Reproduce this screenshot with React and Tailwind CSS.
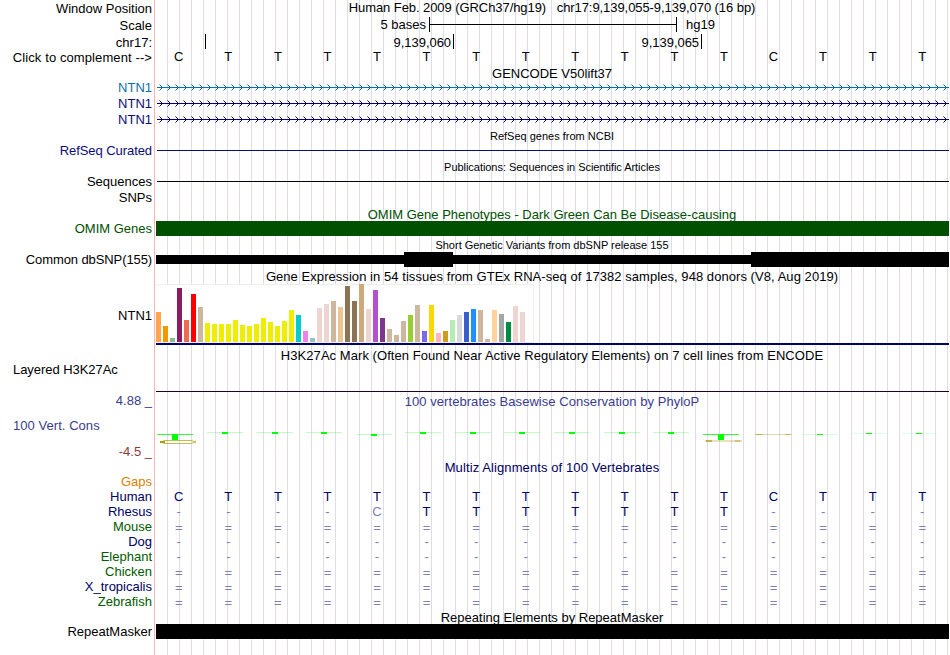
import React from 'react';
import clsx from 'clsx';

const BASES = 'CTTTTTTTTTTTCTTT';

const ALIGNMENTS = [
  { name: 'Human', color: 'text-[#000060]', seq: 'CTTTTTTTTTTTCTTT' },
  { name: 'Rhesus', color: 'text-[#000060]', seq: '----CTTTTTTT----' },
  { name: 'Mouse', color: 'text-[#005a00]', seq: '================' },
  { name: 'Dog', color: 'text-[#000060]', seq: '----------------' },
  { name: 'Elephant', color: 'text-[#005a00]', seq: '----------------' },
  { name: 'Chicken', color: 'text-[#005a00]', seq: '================' },
  { name: 'X_tropicalis', color: 'text-[#000060]', seq: '================' },
  { name: 'Zebrafish', color: 'text-[#005a00]', seq: '================' },
];

// [height in px, tissue color]
const TISSUES = [
  [30, '#ffa54f'], [16, '#ee9a00'], [4, '#8fbc8f'], [54, '#8b1c62'], [22, '#ee6a50'], [48, '#ff0000'],
  [35, '#cdb79e'], [19, '#eeee00'], [18, '#eeee00'], [18, '#eeee00'], [18, '#eeee00'], [22, '#eeee00'],
  [17, '#eeee00'], [16, '#eeee00'], [18, '#eeee00'], [24, '#eeee00'], [20, '#eeee00'], [16, '#eeee00'],
  [21, '#eeee00'], [32, '#eeee00'], [27, '#00cdcd'], [11, '#ee82ee'], [4, '#9ac0cd'], [34, '#eed5d2'],
  [38, '#eed5d2'], [41, '#cdb79e'], [35, '#eec591'], [56, '#8b7355'], [41, '#8b7355'], [58, '#cdaa7d'],
  [33, '#eed5d2'], [52, '#b452cd'], [24, '#7a378b'], [13, '#cdb79e'], [7, '#cdb79e'], [21, '#cdb79e'],
  [27, '#9acd32'], [37, '#cdb79e'], [11, '#7a67ee'], [37, '#ffd700'], [9, '#ffb6c1'], [11, '#cd9b1d'],
  [22, '#b4eeb4'], [27, '#d9d9d9'], [30, '#3a5fcd'], [33, '#1e90ff'], [32, '#cdb79e'], [3, '#cdb79e'],
  [32, '#ffd39b'], [28, '#a6a6a6'], [20, '#008b45'], [36, '#eed5d2'], [30, '#eed5d2'], [0, '#ff00ff'],
];

// PhyloP marks: left of the block, top, height of the block, opacity of the hairline
const MARKS = [
  [16, 25, 6, 0.8], [66, 23, 2, 0.25], [116, 23, 2, 0.25], [165, 23, 2, 0.25], [215, 25, 2, 0.25],
  [264, 23, 2, 0.25], [314, 23, 2, 0.25], [363, 23, 2, 0.25], [413, 23, 2, 0.25], [463, 23, 2, 0.25],
  [512, 23, 2, 0.25], [562, 25, 6, 0.8], [661, 25, 1, 0.15], [710, 24, 1, 0.12], [760, 24, 1, 0.12],
];

function Row({ h, label, color = 'text-black', align = 'items-center justify-end', children }) {
  return (
    <div className={clsx('flex shrink-0', h)}>
      <div className={clsx('flex w-[156px] shrink-0 whitespace-nowrap pr-[4px] pl-[13px]', align, color)}>{label}</div>
      <div className="w-[793px] shrink-0">{children}</div>
    </div>
  );
}

function Title({ children, className = 'text-black' }) {
  return <div className={clsx('flex h-full items-center justify-center whitespace-pre pr-px', className)}>{children}</div>;
}

function baseClass(c, dim) {
  if (c === '=') return 'self-start pt-[2px] leading-[13px] text-[#8080b0]';
  if (c === '-' || dim) return 'text-[#8080b0]';
  return undefined;
}

function Letters({ seq, dimC }) {
  return (
    <div className="-ml-[2px] grid h-full w-[793px] grid-cols-[repeat(16,minmax(0,1fr))] items-center text-center">
      {seq.split('').map((c, i) => (
        <span key={i} className={baseClass(c, dimC && c === 'C')}>{c}</span>
      ))}
    </div>
  );
}

function Transcript({ color }) {
  const arrows = [];
  for (let x = 6.5; x < 793; x += 8) arrows.push(`M${x - 3} 4.5l3 3l-3 3`);
  return (
    <svg className={clsx('block', color)} width="793" height="16" fill="none" stroke="currentColor">
      <path d="M1 7.5H793" shapeRendering="crispEdges" />
      <path d={arrows.join('')} />
    </svg>
  );
}

function Expression() {
  return (
    <div className="flex h-[61px] flex-col border-b-2 border-[#000070]">
      <div className="flex h-[59px] w-[378px] items-end gap-[2px] border border-l-0 border-[#eeeeee] bg-white">
        {TISSUES.map(([height, color], i) => (
          <div key={i} className="w-[5px] shrink-0" style={{ height, backgroundColor: color }} />
        ))}
      </div>
    </div>
  );
}

function PhyloP() {
  return (
    <svg className="block" width="793" height="36" shapeRendering="crispEdges">
      {MARKS.map(([x, y, height, opacity]) => (
        <g key={x} fill="#00ff00">
          <rect x={x - 15} y={y} width="36" height="1" opacity={opacity} />
          <rect x={x} y={y} width="6" height={height} />
        </g>
      ))}
      <g shapeRendering="auto" fill="none" stroke="#a8a000">
        <path d="M4 33L9 31.5H35L40 33L35 34.5H9Z" strokeOpacity="0.7" />
        <path d="M4 33H9" strokeWidth="2" />
      </g>
      <g fill="#b0a020">
        <rect x="549" y="31" width="37" height="2" opacity="0.3" />
        <rect x="550" y="31" width="6" height="2" opacity="0.7" />
        <rect x="579" y="31" width="5" height="2" opacity="0.4" />
        <rect x="599" y="25" width="37" height="1" opacity="0.4" />
        <rect x="600" y="25" width="6" height="1" opacity="0.7" />
        <rect x="629" y="25" width="5" height="1" opacity="0.6" />
      </g>
    </svg>
  );
}

export default function App() {
  return (
    <div className="flex h-[655px] w-[950px] overflow-hidden bg-white bg-[linear-gradient(to_right,#ffb4b4_0_1px,transparent_1px),repeating-linear-gradient(to_right,transparent_0_11px,#dcdcf8_11px_12px)] bg-[size:796px_100%,793px_100%] bg-[position:154px_0,156px_0] bg-no-repeat font-['Liberation_Sans',Arial,sans-serif] text-[13px] leading-[15px]">
      <div className="flex flex-col">
        <Row h="h-[16px]" label="Window Position">
          <Title className="pb-px tracking-[-0.07px]">{'Human Feb. 2009 (GRCh37/hg19)   chr17:9,139,055-9,139,070 (16 bp)'}</Title>
        </Row>
        <Row h="h-[17px]" label="Scale" align="items-center justify-end pt-px">
          <div className="flex h-full items-center">
            <span className="w-[270px] text-right">5 bases</span>
            <div className="ml-[3px] flex h-[15px] w-[248px] items-center border-x border-black">
              <div className="h-px w-full bg-black" />
            </div>
            <span className="ml-[9px]">hg19</span>
          </div>
        </Row>
        <Row h="h-[17px]" label="chr17:" align="items-center justify-end pt-[2px]">
          <div className="flex items-center pt-[1px]">
            <div className="h-[15px] w-[50px] border-r border-black" />
            <div className="h-[15px] w-[248px] border-r border-black pr-[2px] text-right leading-[17px] tracking-[-0.05px]">9,139,060</div>
            <div className="h-[15px] w-[248px] border-r border-black pr-[2px] text-right leading-[17px] tracking-[-0.05px]">9,139,065</div>
          </div>
        </Row>
        <Row h="h-[15px]" label="Click to complement -->" align="items-center justify-end tracking-[0.1px]">
          <div className="-mt-px h-full"><Letters seq={BASES} /></div>
        </Row>

        <Row h="h-[15px]"><Title className="pt-[2px]">GENCODE V50lift37</Title></Row>
        <Row h="h-[16px]" label="NTN1" color="text-[#0c70ac]" align="items-start justify-end"><Transcript color="text-[#0c70ac]" /></Row>
        <Row h="h-[16px]" label="NTN1" color="text-[#0c0c78]" align="items-start justify-end"><Transcript color="text-[#000070]" /></Row>
        <Row h="h-[16px]" label="NTN1" color="text-[#0c0c78]" align="items-start justify-end"><Transcript color="text-[#000070]" /></Row>

        <Row h="h-[15px]"><Title className="pt-[2px] text-[11px]">RefSeq genes from NCBI</Title></Row>
        <Row h="h-[16px]" label="RefSeq Curated" color="text-[#0c0c78]" align="items-start justify-end tracking-[-0.07px]">
          <div className="ml-px h-[8px] border-b border-[#0c0c78]" />
        </Row>
        <Row h="h-[15px]"><Title className="pt-[2px] text-[11px] tracking-[-0.04px]">Publications: Sequences in Scientific Articles</Title></Row>
        <Row h="h-[16px]" label="Sequences" align="items-start justify-end">
          <div className="ml-px h-[8px] border-b border-black" />
        </Row>
        <Row h="h-[16px]" label="SNPs" align="items-start justify-end" />

        <Row h="h-[15px]"><Title className="pt-[2px] text-[#005000]">OMIM Gene Phenotypes - Dark Green Can Be Disease-causing</Title></Row>
        <Row h="h-[15px]" label="OMIM Genes" color="text-[#005000]"><div className="h-full bg-[#005000]" /></Row>
        <Row h="h-[16px]"><Title className="pt-[2px] text-[11px]">Short Genetic Variants from dbSNP release 155</Title></Row>
        <Row h="h-[15px]" label="Common dbSNP(155)" align="items-center justify-end tracking-[-0.1px]">
          <div className="flex h-full items-center">
            <div className="h-[9px] w-[248px] bg-black" />
            <div className="h-[15px] w-[49px] bg-black" />
            <div className="h-[9px] w-[298px] bg-black" />
            <div className="h-[15px] w-[198px] bg-black" />
          </div>
        </Row>

        <Row h="h-[17px]">
          <Title className="pt-[2px] tracking-[0.055px]">Gene Expression in 54 tissues from GTEx RNA-seq of 17382 samples, 948 donors (V8, Aug 2019)</Title>
        </Row>
        <Row h="h-[61px]" label="NTN1" align="items-center justify-end pt-px"><Expression /></Row>

        <Row h="h-[20px]">
          <Title className="tracking-[0.055px]">H3K27Ac Mark (Often Found Near Active Regulatory Elements) on 7 cell lines from ENCODE</Title>
        </Row>
        <Row h="h-[28px]" label="Layered H3K27Ac" align="items-start justify-start -mt-[3px] tracking-[-0.05px]">
          <div className="h-[27px] border-b border-[#200020]" />
        </Row>

        <Row h="h-[16px]" label="4.88 _" color="text-[#3c3c8c]" align="items-start justify-end">
          <Title className="pt-px tracking-[0.055px] text-[#3c3c8c]">100 vertebrates Basewise Conservation by PhyloP</Title>
        </Row>
        <Row h="h-[35px]" label="100 Vert. Cons" color="text-[#3c3c8c]" align="items-center justify-start pb-[2px] tracking-[0.05px]"><PhyloP /></Row>
        <Row h="h-[16px]" label="-4.5 _" color="text-[#8c3c3c]" align="items-start justify-end" />

        <Row h="h-[14px]"><Title className="tracking-[0.1px] text-[#000060]">Multiz Alignments of 100 Vertebrates</Title></Row>
        <Row h="h-[15px]" label="Gaps" color="text-[#e08000]" />
        {ALIGNMENTS.map((a) => (
          <Row key={a.name} h="h-[15px]" label={a.name} color={a.color}>
            <div className="h-full text-[#000060]"><Letters seq={a.seq} dimC={a.name === 'Rhesus'} /></div>
          </Row>
        ))}

        <Row h="h-[15px]"><Title className="pt-[2px]">Repeating Elements by RepeatMasker</Title></Row>
        <Row h="h-[15px]" label="RepeatMasker"><div className="h-full bg-black" /></Row>
      </div>
    </div>
  );
}
